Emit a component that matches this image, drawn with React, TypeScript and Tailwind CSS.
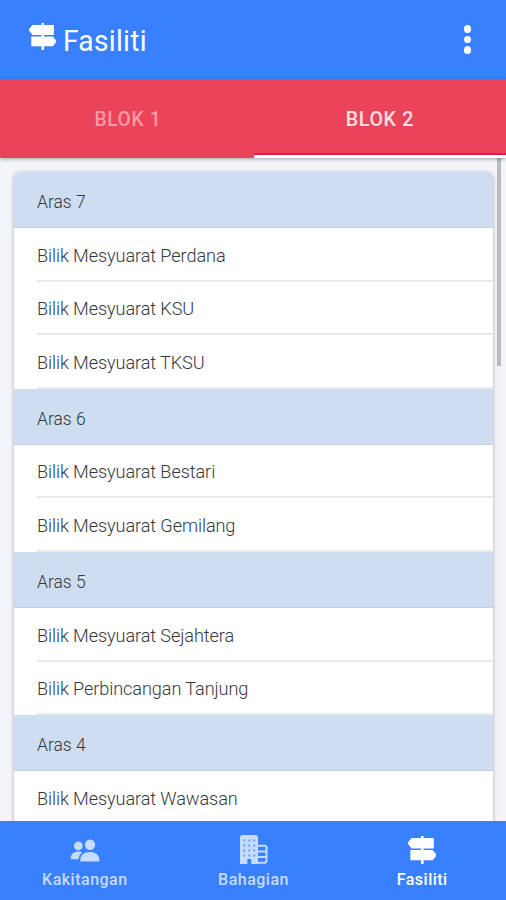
type Level = {
  name: string;
  rooms: string[];
};

const levels: Level[] = [
  {
    name: "Aras 7",
    rooms: ["Bilik Mesyuarat Perdana", "Bilik Mesyuarat KSU", "Bilik Mesyuarat TKSU"],
  },
  {
    name: "Aras 6",
    rooms: ["Bilik Mesyuarat Bestari", "Bilik Mesyuarat Gemilang"],
  },
  {
    name: "Aras 5",
    rooms: ["Bilik Mesyuarat Sejahtera", "Bilik Perbincangan Tanjung"],
  },
  {
    name: "Aras 4",
    rooms: ["Bilik Mesyuarat Wawasan"],
  },
];

function SignpostIcon({ className }: { className?: string }) {
  return (
    <svg viewBox="0 0 28 28" fill="currentColor" className={className} aria-hidden="true">
      <path d="M13 0h2.6v2h10.2v10.4H3.6L0 7.9V6.4L3.6 2H13z" />
      <path d="M2.4 14H13v-2h2.6v2h9.2l3.4 4.4v1.4l-3.4 4.4h-9.2V28H13v-3.8H2.4z" />
    </svg>
  );
}

function PeopleIcon({ className }: { className?: string }) {
  return (
    <svg viewBox="0 0 30 30" fill="currentColor" className={className} aria-hidden="true">
      <circle cx="8.3" cy="10.8" r="4.4" />
      <path d="M.8 24.2v-1.4c0-4 3.6-6.3 7.5-6.3 1.5 0 2.9.3 4.1.9-2.3 1.4-3.7 3.7-3.9 6.8z" />
      <circle cx="20" cy="9.8" r="5.2" />
      <path d="M10.3 26.4v-2c0-4.2 4.2-7.4 9.6-7.4s9.4 3.2 9.4 7.4v2z" />
    </svg>
  );
}

function BuildingIcon({ className }: { className?: string }) {
  return (
    <svg viewBox="0 0 28 30" fill="currentColor" className={className} aria-hidden="true">
      <path d="M2.5 0h13A2.5 2.5 0 0 1 18 2.5V29h-6.8v-5H7.4v5H0V2.5A2.5 2.5 0 0 1 2.5 0" />
      <path
        d="M18 10.8h6.5a2 2 0 0 1 2 2v13a2 2 0 0 1-2 2H18M18 16.5h8.5M18 22h8.5"
        fill="none"
        stroke="currentColor"
        strokeWidth="2"
      />
      <path
        d="M3.2 5.5h12M3.2 10.5h12M3.2 15.5h12M3.2 20.5h12"
        stroke="#6da1ff"
        strokeWidth="2"
        strokeDasharray="2 3"
      />
    </svg>
  );
}

function Header() {
  return (
    <header className="flex h-[79px] shrink-0 items-center justify-between bg-[#3880ff] pl-[29px] pr-[35px] text-white">
      <h1 className="flex items-center gap-[7px] text-[29px] font-normal leading-none tracking-[0.3px]">
        <SignpostIcon className="-mt-[6px] size-[27px]" />
        <span className="origin-left scale-x-[0.97] pt-1">Fasiliti</span>
      </h1>
      <button className="flex flex-col items-center gap-[3px]" aria-label="Menu">
        <span className="size-[7.5px] rounded-full bg-white" />
        <span className="size-[7.5px] rounded-full bg-white" />
        <span className="size-[7.5px] rounded-full bg-white" />
      </button>
    </header>
  );
}

function BlockTabs() {
  return (
    <div className="z-10 grid h-[79px] shrink-0 grid-cols-[254px_252px] bg-[#eb445a] text-[20px] font-medium tracking-[0.7px] shadow-[0_1px_4px_rgba(0,0,0,0.35)]">
      <button className="border-b-[3px] border-[#eb445a] pt-[3px] text-[#f79ba6]">
        <span className="inline-block scale-x-[0.96] pl-px">BLOK 1</span>
      </button>
      <button className="border-b-[3px] border-white pt-[3px] text-[#fde0e3] shadow-[inset_0_-2px_0_#dc1e41]">
        <span className="inline-block scale-x-[0.98]">BLOK 2</span>
      </button>
    </div>
  );
}

function LevelGroup({ level }: { level: Level }) {
  return (
    <section>
      <h2 className="flex h-[56.4px] items-center border-b border-[#c0cfe0] bg-[#cedef0] pl-[23px] pt-[6px] text-[19px]">
        <span className="origin-left scale-x-[0.92]">{level.name}</span>
      </h2>
      <ul>
        {level.rooms.map((room) => (
          <li key={room} className="h-[53.4px] pl-[23px]">
            <div className="flex h-full items-center border-b-2 border-[#e8e9ea] pt-[4px] text-[19px] tracking-[-0.1px]">
              <span className="origin-left scale-x-[0.954]">{room}</span>
            </div>
          </li>
        ))}
      </ul>
    </section>
  );
}

function TabBar() {
  return (
    <nav className="grid h-[79px] shrink-0 grid-cols-3 bg-[#3880ff] text-[16px] font-medium leading-5 tracking-[0.5px] text-[#c5dbff]">
      <a className="flex flex-col items-center pt-[14px]">
        <PeopleIcon className="ml-px size-[30px]" />
        <span className="mt-[5px] pl-px">Kakitangan</span>
      </a>
      <a className="flex flex-col items-center pt-[14px]">
        <BuildingIcon className="ml-[2px] h-[30px] w-[28px]" />
        <span className="mt-[5px] pl-px">Bahagian</span>
      </a>
      <a className="flex flex-col items-center pt-[15px] text-white">
        <SignpostIcon className="ml-px size-[28px]" />
        <span className="mt-[6px] pl-px">Fasiliti</span>
      </a>
    </nav>
  );
}

export default function App() {
  return (
    <div className="flex h-[900px] w-[506px] flex-col overflow-hidden bg-[#f3f5f8] font-[Roboto,sans-serif] font-light text-[#35383f]">
      <Header />
      <BlockTabs />
      <main className="flex min-h-0 flex-1 items-start overflow-hidden">
        <div className="ml-[14px] mt-[14px] w-[479px] shrink-0 overflow-hidden rounded-t-[6px] bg-white shadow-[0_1px_4px_rgba(0,0,0,0.3)]">
          {levels.map((level) => (
            <LevelGroup key={level.name} level={level} />
          ))}
        </div>
        <div className="ml-[4px] h-[208px] w-[4px] shrink-0 bg-[#b9bcbf]" />
      </main>
      <TabBar />
    </div>
  );
}
